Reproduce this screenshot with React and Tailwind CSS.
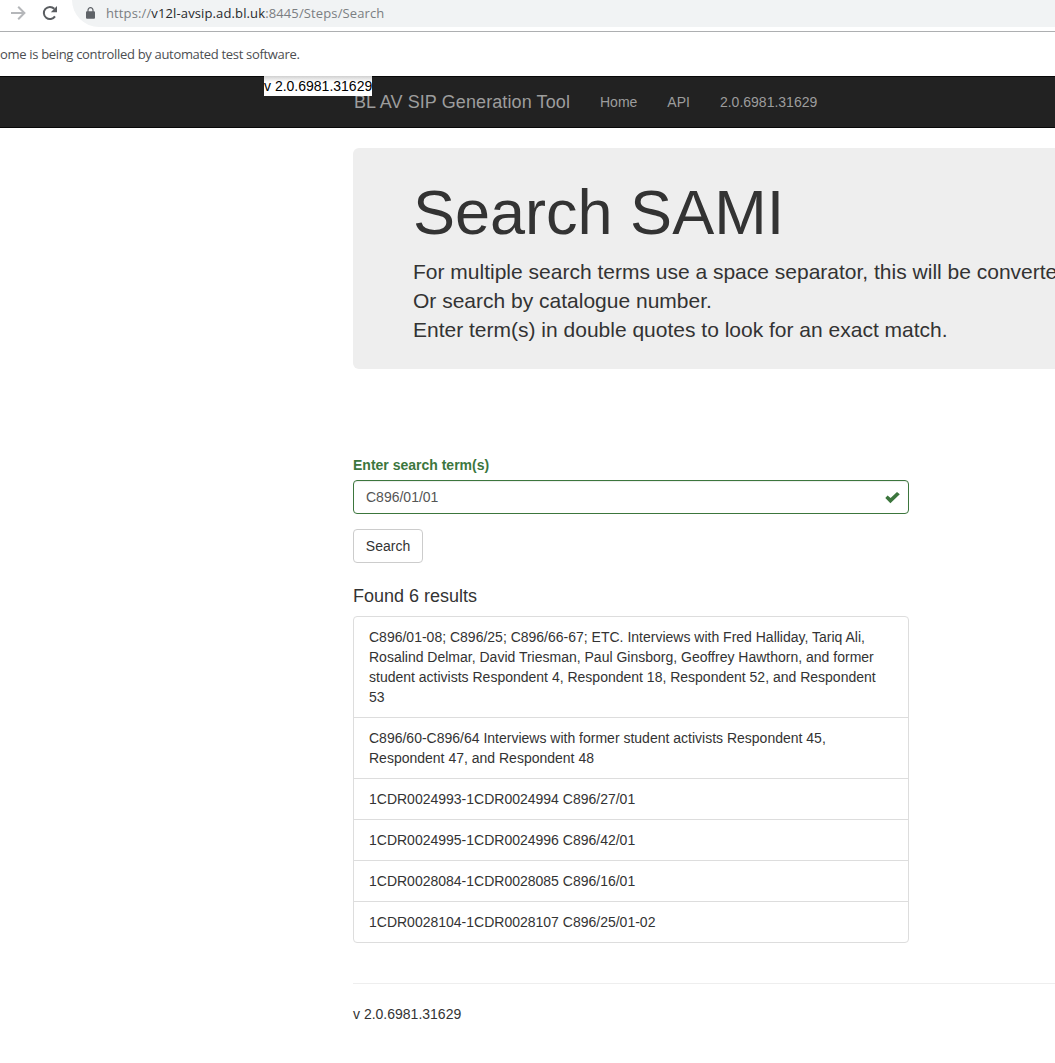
import React from 'react';

const results = [
  'C896/01-08; C896/25; C896/66-67; ETC. Interviews with Fred Halliday, Tariq Ali, Rosalind Delmar, David Triesman, Paul Ginsborg, Geoffrey Hawthorn, and former student activists Respondent 4, Respondent 18, Respondent 52, and Respondent 53',
  'C896/60-C896/64 Interviews with former student activists Respondent 45, Respondent 47, and Respondent 48',
  '1CDR0024993-1CDR0024994 C896/27/01',
  '1CDR0024995-1CDR0024996 C896/42/01',
  '1CDR0028084-1CDR0028085 C896/16/01',
  '1CDR0028104-1CDR0028107 C896/25/01-02',
];

function BrowserBar() {
  return (
    <div className="flex h-8 items-start border-b border-[#adafb1] bg-white font-['Open_Sans',sans-serif]">
      <svg className="ml-[10px] mt-[5px] h-4 w-4 shrink-0" viewBox="0 0 16 16" fill="none" stroke="#b5b7ba" strokeWidth="2">
        <path d="M1 8h13M8.2 1.8L14.4 8l-6.2 6.2" />
      </svg>
      <svg className="ml-4 mt-[5px] h-4 w-4 shrink-0" viewBox="0 0 16 16">
        <path d="M13 11.4A6.1 6.1 0 1 1 12.3 3.7" fill="none" stroke="#5a5d61" strokeWidth="2" />
        <path d="M15 1v6.2H8.8z" fill="#5a5d61" />
      </svg>
      <div className="ml-[14px] flex h-[27px] flex-1 items-center rounded-bl-full bg-[#f1f3f4] pl-[14px]">
        <svg className="-mt-px h-3 w-[9px] shrink-0" viewBox="0 0 9 12">
          <path d="M2 5V3.2a2.5 2.5 0 0 1 5 0V5" fill="none" stroke="#5f6368" strokeWidth="1.2" />
          <rect y="4.3" width="9" height="7.4" rx="1" fill="#5f6368" />
        </svg>
        <span className="-mt-0.5 ml-[11px] whitespace-nowrap text-[13px] leading-5 tracking-[0.125px] text-[#7b7e82]">
          https://<span className="text-[#27292c]">v12l-avsip.ad.bl.uk</span>:8445/Steps/Search
        </span>
      </div>
    </div>
  );
}

export default function App() {
  return (
    <div className="h-[1063px] w-full overflow-hidden bg-white font-['Liberation_Sans',Arial,sans-serif] text-sm leading-5 text-[#333]">
      <BrowserBar />
      <div className="flex h-11 items-center whitespace-nowrap bg-white font-['Open_Sans',sans-serif] text-[13px] tracking-[-0.32px] text-[#4c4e51]">
        ome is being controlled by automated test software.
      </div>

      <nav className="relative flex h-[52px] items-center border-y border-[#080808] bg-[#222] pl-[354px] text-[#9d9d9d]">
        <span className="whitespace-nowrap text-lg leading-5 tracking-[0.1px]">BL AV SIP Generation Tool</span>
        <span className="ml-[30px]">Home</span>
        <span className="ml-[30px]">API</span>
        <span className="ml-[30px]">2.0.6981.31629</span>
        <div className="absolute -top-px left-[264px] h-5 w-[108px] whitespace-nowrap bg-white bg-linear-to-b from-[#d0d0d0] to-white to-30% text-black">
          v 2.0.6981.31629
        </div>
      </nav>

      <main className="ml-[353px] w-[1140px]">
        <section className="mt-5 h-[221px] rounded-md bg-[#eee] px-[60px] pt-[30px]">
          <h1 className="text-[63px] leading-[69px]">Search SAMI</h1>
          <p className="mt-[10px] text-[21px] leading-[29px]">
            For multiple search terms use a space separator, this will be converte
            <br />
            Or search by catalogue number.
            <br />
            Enter term(s) in double quotes to look for an exact match.
          </p>
        </section>

        <section className="mt-[86px] w-[556px]">
          <label className="block font-bold text-[#3c763d]">Enter search term(s)</label>
          <div className="mt-[5px] flex h-[34px] items-center justify-between rounded border border-[#3c763d] pl-3 pr-2 text-[#555] shadow-[inset_0_1px_1px_rgba(0,0,0,0.075)]">
            C896/01/01
            <svg className="h-[13px] w-[15px]" viewBox="0 0 15 13" fill="#3c763d">
              <path d="M0.3 6.9L2.6 4.6 5.6 7.1 12 0.9 14.8 3.3 5.4 12.3z" />
            </svg>
          </div>
          <button className="mt-[15px] block h-[34px] w-[70px] rounded border border-[#ccc] bg-white">Search</button>
          <h4 className="mt-[23px] text-lg leading-5">Found 6 results</h4>
          <ul className="mt-[10px] divide-y divide-[#ddd] rounded border border-[#ddd]">
            {results.map((text) => (
              <li key={text} className="px-[15px] py-[10px]">{text}</li>
            ))}
          </ul>
        </section>

        <hr className="mt-10 border-[#eee]" />
        <footer className="mt-5">v 2.0.6981.31629</footer>
      </main>
    </div>
  );
}
